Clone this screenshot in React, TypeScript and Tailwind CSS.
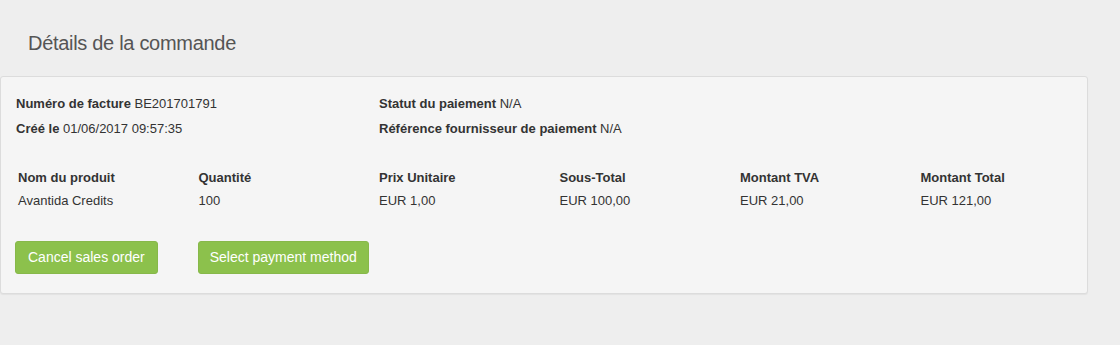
const lines = [
  { label: 'Nom du produit', value: 'Avantida Credits' },
  { label: 'Quantité', value: '100' },
  { label: 'Prix Unitaire', value: 'EUR 1,00' },
  { label: 'Sous-Total', value: 'EUR 100,00' },
  { label: 'Montant TVA', value: 'EUR 21,00' },
  { label: 'Montant Total', value: 'EUR 121,00' },
];

const OrderDetails = () => {
  return (
    <div className="min-h-[345px] bg-[#eeeeee] font-['Liberation_Sans',Arial,sans-serif] text-[#333333]">
      <h1 className="pt-[29px] pl-[28px] text-[20px] leading-[28px] font-normal text-[#555555] tracking-[-0.3px]">
        Détails de la commande
      </h1>

      <div className="mt-[19px] w-[1088px] rounded-[3px] border border-[#dcdcdc] bg-[#f5f5f5] pt-[18px] pb-[19px] pl-[15px] text-[13px] shadow-[0_1px_1px_rgba(0,0,0,0.05)]">
        {/* invoice info */}
        <div className="flex">
          <div className="flex w-[363px] flex-col gap-[7px] leading-[18px]">
            <p><span className="font-bold">Numéro de facture</span> BE201701791</p>
            <p><span className="font-bold">Créé le</span> 01/06/2017 09:57:35</p>
          </div>
          <div className="flex flex-col gap-[7px] leading-[18px]">
            <p><span className="font-bold">Statut du paiement</span> N/A</p>
            <p><span className="font-bold">Référence fournisseur de paiement</span> N/A</p>
          </div>
        </div>

        {/* product lines */}
        <div className="mt-[31px] ml-[2px] flex">
          {lines.map((l) => (
            <div key={l.label} className="flex w-[180.5px] shrink-0 flex-col gap-[5px] leading-[18px]">
              <span className="font-bold">{l.label}</span>
              <span>{l.value}</span>
            </div>
          ))}
        </div>

        <div className="mt-[31px] -ml-[1px] flex gap-[40px]">
          <button className="h-[33px] rounded-[3px] border border-[#87b84a] bg-[#8cc14c] px-[12px] text-[14px] text-white">
            Cancel sales order
          </button>
          <button className="h-[33px] rounded-[3px] border border-[#87b84a] bg-[#8cc14c] px-[11px] text-[14px] text-white">
            Select payment method
          </button>
        </div>
      </div>
    </div>
  );
};

export default function App() {
  return <OrderDetails />;
}
